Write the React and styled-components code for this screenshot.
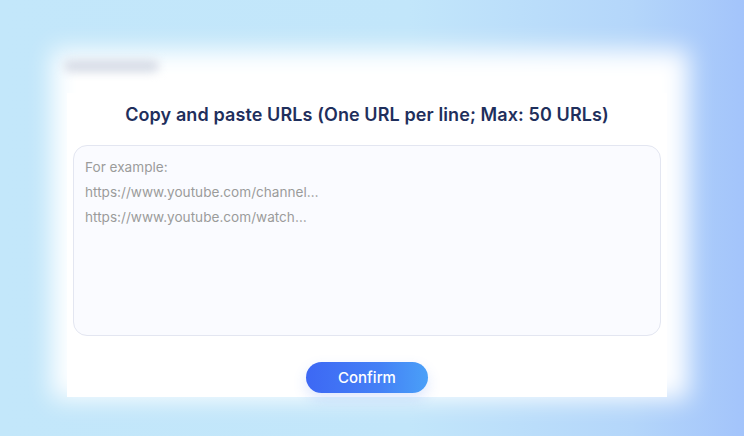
import React from 'react';
import styled, { createGlobalStyle } from 'styled-components';

const GlobalStyle = createGlobalStyle`
  html, body, #root {
    margin: 0;
    height: 100%;
  }
  body {
    font-family: Inter, "Liberation Sans", sans-serif;
    overflow: hidden;
  }
`;

const Stage = styled.div`
  height: 436px;
  width: 744px;
  background: linear-gradient(90deg, #c3e7fa 0%, #c2e6fa 55%, #b4d6fa 85%, #a3c4fb 100%);
  display: flex;
  align-items: flex-start;
  justify-content: flex-start;
  padding: 48px 0 0 52px;
  box-sizing: border-box;
`;

// blurred frame of the dialog behind the sharp content
const Frame = styled.div`
  position: relative;
  width: 636px;
  display: flex;
  flex-direction: column;
  &:before {
    content: "";
    position: absolute;
    inset: 2px 0 -2px 0;
    background: #ffffff;
    filter: blur(12px);
  }
`;

const FrameHeader = styled.div`
  position: relative;
  height: 45px;
  display: flex;
  align-items: flex-start;
  padding: 12px 0 0 12px;
  box-sizing: border-box;
`;

const BlurredTitle = styled.div`
  width: 95px;
  height: 12px;
  border-radius: 6px;
  background: #d6dbe6;
  filter: blur(5px);
`;

const Panel = styled.div`
  position: relative;
  margin: 0 21px 0 15px;
  background: #ffffff;
  height: 304px;
  box-sizing: border-box;
  padding: 0 6px;
  display: flex;
  flex-direction: column;
  align-items: center;
`;

const Title = styled.h2`
  margin: 9px 0 0;
  font-size: 18px;
  line-height: 26px;
  font-weight: 600;
  color: #1f2f5c;
  letter-spacing: 0.1px;
`;

const UrlBox = styled.textarea`
  margin-top: 17px;
  width: 100%;
  height: 191px;
  box-sizing: border-box;
  resize: none;
  border: 1px solid #e3e6f1;
  border-radius: 14px;
  background: #fafbff;
  padding: 9px 11px;
  font-family: Inter, "Liberation Sans", sans-serif;
  font-size: 13.6px;
  line-height: 25px;
  color: #333;
  outline: none;
  &::placeholder {
    color: #9b9b9b;
  }
`;

const Footer = styled.div`
  margin-top: 26px;
  display: flex;
  justify-content: center;
`;

const ConfirmButton = styled.button`
  width: 122px;
  height: 31px;
  border: none;
  border-radius: 16px;
  background: linear-gradient(90deg, #3d68f4 0%, #4480f6 60%, #4aa0f8 100%);
  color: #ffffff;
  font-family: Inter, "Liberation Sans", sans-serif;
  font-size: 15px;
  font-weight: 500;
  cursor: pointer;
  box-shadow: 0 6px 14px rgba(70, 120, 245, 0.18);
`;

const placeholder = 'For example:\nhttps://www.youtube.com/channel\u2026\nhttps://www.youtube.com/watch\u2026';

export default function App() {
  return (
    <>
      <GlobalStyle />
      <Stage>
        <Frame>
          <FrameHeader>
            <BlurredTitle />
          </FrameHeader>
          <Panel>
            <Title>Copy and paste URLs (One URL per line; Max: 50 URLs)</Title>
            <UrlBox placeholder={placeholder} />
            <Footer>
              <ConfirmButton>Confirm</ConfirmButton>
            </Footer>
          </Panel>
        </Frame>
      </Stage>
    </>
  );
}
